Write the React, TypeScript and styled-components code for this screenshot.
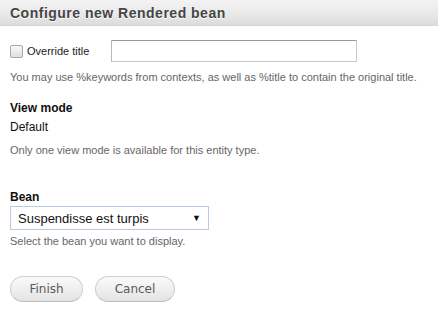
import React, { useState } from "react";
import styled, { createGlobalStyle } from "styled-components";

const GlobalStyle = createGlobalStyle`
  html, body {
    margin: 0;
    padding: 0;
    background: #ffffff;
  }
  body {
    font-family: "Liberation Sans", Arial, sans-serif;
    color: #222;
  }
`;

const Panel = styled.div`
  width: 438px;
  height: 321px;
  overflow: hidden;
  background: #ffffff;
`;

const Header = styled.div`
  height: 26px;
  box-sizing: border-box;
  padding: 0 10px;
  display: flex;
  align-items: center;
  background: linear-gradient(to bottom, #f3f3f3 0%, #e9e9e9 55%, #dcdcdc 100%);
  border-bottom: 1px solid #d6d6d6;
`;

const Title = styled.h1`
  margin: 0;
  font-size: 14px;
  font-weight: bold;
  letter-spacing: 0.5px;
  color: #454545;
  text-shadow: 0 1px 0 #ffffff;
`;

const Body = styled.div`
  padding: 14px 10px 0;
`;

const TitleRow = styled.div`
  display: flex;
  align-items: center;
  height: 22px;
`;

const CheckLabel = styled.label`
  width: 101px;
  display: flex;
  align-items: center;
  gap: 4px;
  font-size: 11px;
  color: #222;
`;

const Box = styled.span<{ $checked: boolean }>`
  width: 11px;
  height: 11px;
  border: 1px solid #a9a9a9;
  border-radius: 2px;
  background: ${(p) =>
    p.$checked ? "#6d8fc9" : "linear-gradient(to bottom, #fafafa, #dedede)"};
  display: inline-block;
  margin-top: 1px;
`;

const TextInput = styled.input`
  width: 246px;
  height: 22px;
  box-sizing: border-box;
  border: 1px solid #c8c8c8;
  border-top-color: #9a9a9a;
  border-left-color: #b8b8b8;
  padding: 2px 4px;
  font-family: inherit;
  font-size: 12px;
  outline: none;
`;

const Description = styled.div<{ $mt?: number }>`
  margin-top: ${(p) => p.$mt ?? 0}px;
  font-size: 11px;
  line-height: 14px;
  color: #666;
`;

const FieldLabel = styled.div<{ $mt: number }>`
  margin-top: ${(p) => p.$mt}px;
  font-size: 12px;
  font-weight: bold;
  line-height: 14px;
  color: #111;
`;

const Value = styled.div`
  margin-top: 5px;
  font-size: 12px;
  line-height: 14px;
  color: #111;
`;

const SelectBox = styled.div`
  position: relative;
  margin-top: 2px;
  width: 199px;
  height: 24px;
  box-sizing: border-box;
  border: 1px solid #b9c9df;
  display: flex;
  align-items: center;
  padding: 0 7px;
  font-size: 13px;
  color: #111;
  background: #fff;
`;

const Arrow = styled.span`
  margin-left: auto;
  font-size: 9px;
  color: #111;
`;

const Actions = styled.div`
  margin-top: 28px;
  display: flex;
  gap: 12px;
`;

const Button = styled.button<{ $w: number }>`
  width: ${(p) => p.$w}px;
  height: 26px;
  border: 1px solid #cfcfcf;
  border-bottom-color: #bdbdbd;
  border-radius: 13px;
  background: linear-gradient(to bottom, #fafafa 0%, #ededed 60%, #e3e3e3 100%);
  font-family: "DejaVu Sans", sans-serif;
  font-size: 12px;
  color: #5a5a5a;
  padding: 0;
  cursor: pointer;
`;

export default function App() {
  const [override, setOverride] = useState(false);
  return (
    <Panel>
      <GlobalStyle />
      <Header>
        <Title>Configure new Rendered bean</Title>
      </Header>
      <Body>
        <TitleRow>
          <CheckLabel onClick={() => setOverride(!override)}>
            <Box $checked={override} />
            Override title
          </CheckLabel>
          <TextInput type="text" />
        </TitleRow>
        <Description $mt={8}>
          You may use %keywords from contexts, as well as %title to contain the original title.
        </Description>
        <FieldLabel $mt={17}>View mode</FieldLabel>
        <Value>Default</Value>
        <Description $mt={9}>Only one view mode is available for this entity type.</Description>
        <FieldLabel $mt={33}>Bean</FieldLabel>
        <SelectBox>
          Suspendisse est turpis
          <Arrow>▼</Arrow>
        </SelectBox>
        <Description $mt={4}>Select the bean you want to display.</Description>
        <Actions>
          <Button $w={73}>Finish</Button>
          <Button $w={80}>Cancel</Button>
        </Actions>
      </Body>
    </Panel>
  );
}
